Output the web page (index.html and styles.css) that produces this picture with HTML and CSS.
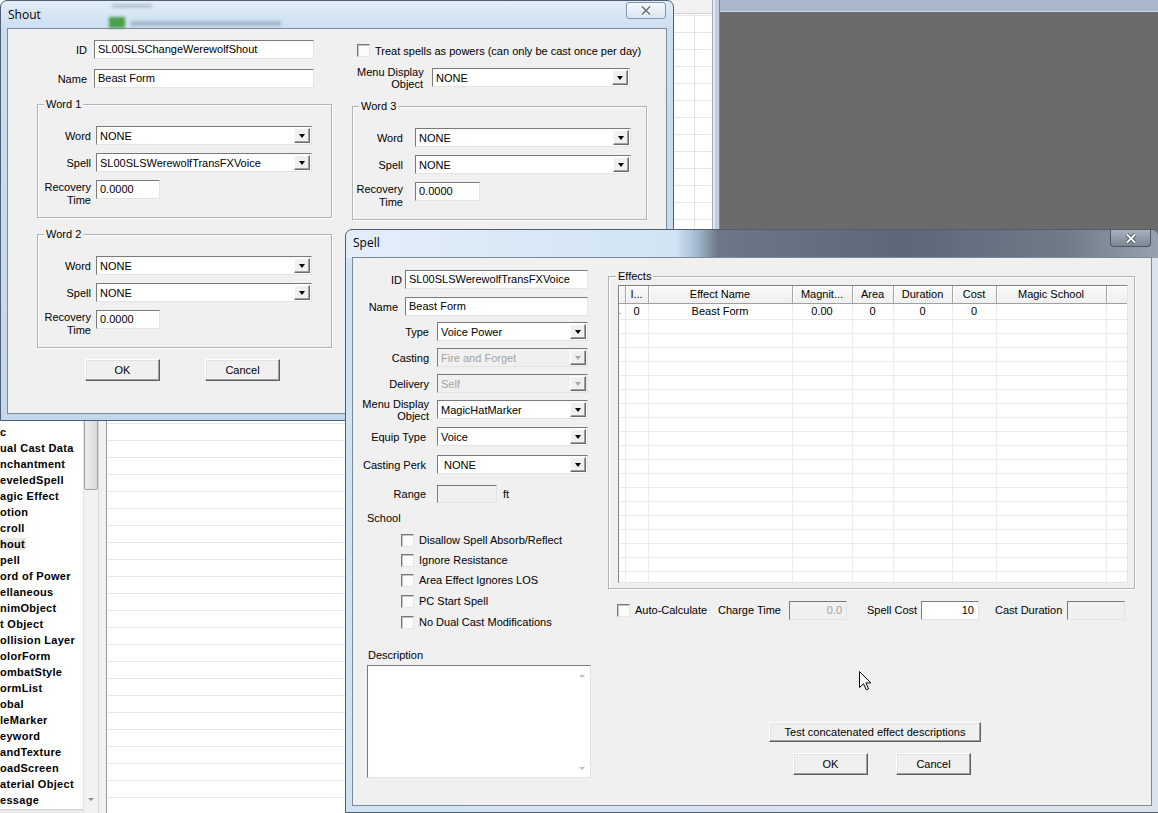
FILE: index.html
```html
<!DOCTYPE html>
<html lang="en">
<head>
    <meta charset="UTF-8">
    <title>Shout - Spell</title>
    <link rel="stylesheet" href="styles.css">
</head>
<body>
<div class="desktop">

    <!-- main editor window behind the dialogs -->
    <div class="main">
        <div class="tree-pane">
            <ul class="tree">
                <li>c</li>
                <li>ual Cast Data</li>
                <li>nchantment</li>
                <li>eveledSpell</li>
                <li>agic Effect</li>
                <li>otion</li>
                <li>croll</li>
                <li class="sel"><span>hout</span></li>
                <li>pell</li>
                <li>ord of Power</li>
                <li>ellaneous</li>
                <li>nimObject</li>
                <li>t Object</li>
                <li>ollision Layer</li>
                <li>olorForm</li>
                <li>ombatStyle</li>
                <li>ormList</li>
                <li>obal</li>
                <li>leMarker</li>
                <li>eyword</li>
                <li>andTexture</li>
                <li>oadScreen</li>
                <li>aterial Object</li>
                <li>essage</li>
            </ul>
            <div class="tree-hscroll"></div>
        </div>
        <div class="tree-scroll">
            <div class="thumb"></div>
            <div class="scroll-arrow"></div>
        </div>
        <div class="splitter"></div>
        <div class="records">
            <div class="records-head"></div>
            <div class="records-rows"></div>
        </div>
        <div class="mdi-edge"></div>
        <div class="mdi">
            <div class="mdi-top"></div>
        </div>
    </div>

    <!-- Shout dialog -->
    <div class="window shout">
        <div class="titlebar">
            <span class="ghost ghost-icon"></span>
            <span class="ghost ghost-text1"></span>
            <span class="ghost ghost-text2"></span>
            <span class="title">Shout</span>
            <span class="close close-light">
                <svg width="14" height="11" viewBox="0 0 14 11"><path d="M3 1.5 L11 9.5 M11 1.5 L3 9.5" stroke="#fff" stroke-width="3"/><path d="M3 1.5 L11 9.5 M11 1.5 L3 9.5" stroke="#5f6a76" stroke-width="1.5"/></svg>
            </span>
        </div>
        <div class="client">
            <div class="shout-head">
                <div class="shout-names">
                    <div class="frow"><span class="lbl">ID</span><span class="edit">SL00SLSChangeWerewolfShout</span></div>
                    <div class="frow"><span class="lbl">Name</span><span class="edit">Beast Form</span></div>
                </div>
                <div class="shout-opts">
                    <div class="check-line"><span class="check"></span>Treat spells as powers (can only be cast once per day)</div>
                    <div class="frow"><span class="lbl two">Menu Display<br>Object</span><span class="combo"><span class="combo-text">NONE</span><span class="drop"></span></span></div>
                </div>
            </div>

            <div class="words">
                <div class="group word">
                    <span class="group-title">Word 1</span>
                    <div class="frow"><span class="lbl">Word</span><span class="combo"><span class="combo-text">NONE</span><span class="drop"></span></span></div>
                    <div class="frow"><span class="lbl">Spell</span><span class="combo"><span class="combo-text">SL00SLSWerewolfTransFXVoice</span><span class="drop"></span></span></div>
                    <div class="frow recovery"><span class="lbl two">Recovery<br>Time</span><span class="edit">0.0000</span></div>
                </div>
                <div class="group word word3">
                    <span class="group-title">Word 3</span>
                    <div class="frow"><span class="lbl">Word</span><span class="combo"><span class="combo-text">NONE</span><span class="drop"></span></span></div>
                    <div class="frow"><span class="lbl">Spell</span><span class="combo"><span class="combo-text">NONE</span><span class="drop"></span></span></div>
                    <div class="frow recovery"><span class="lbl two">Recovery<br>Time</span><span class="edit">0.0000</span></div>
                </div>
                <div class="group word">
                    <span class="group-title">Word 2</span>
                    <div class="frow"><span class="lbl">Word</span><span class="combo"><span class="combo-text">NONE</span><span class="drop"></span></span></div>
                    <div class="frow"><span class="lbl">Spell</span><span class="combo"><span class="combo-text">NONE</span><span class="drop"></span></span></div>
                    <div class="frow recovery"><span class="lbl two">Recovery<br>Time</span><span class="edit">0.0000</span></div>
                </div>
            </div>

            <div class="shout-buttons">
                <button class="btn">OK</button>
                <button class="btn">Cancel</button>
            </div>
        </div>
    </div>

    <!-- Spell dialog -->
    <div class="window spell">
        <div class="titlebar">
            <span class="title">Spell</span>
            <span class="close close-dark">
                <svg width="14" height="11" viewBox="0 0 14 11"><path d="M3 1.5 L11 9.5 M11 1.5 L3 9.5" stroke="#34404d" stroke-width="3.6"/><path d="M3 1.5 L11 9.5 M11 1.5 L3 9.5" stroke="#fff" stroke-width="2"/></svg>
            </span>
        </div>
        <div class="client">
            <div class="spell-left">
                <div class="spell-fields">
                    <div class="frow sp-id"><span class="lbl">ID</span><span class="edit">SL00SLSWerewolfTransFXVoice</span></div>
                    <div class="frow sp-name"><span class="lbl">Name</span><span class="edit">Beast Form</span></div>
                    <div class="frow sp-wide"><span class="lbl">Type</span><span class="combo"><span class="combo-text">Voice Power</span><span class="drop"></span></span></div>
                    <div class="frow sp-wide"><span class="lbl">Casting</span><span class="combo disabled"><span class="combo-text">Fire and Forget</span><span class="drop"></span></span></div>
                    <div class="frow sp-wide"><span class="lbl">Delivery</span><span class="combo disabled"><span class="combo-text">Self</span><span class="drop"></span></span></div>
                    <div class="frow sp-wide"><span class="lbl two">Menu Display<br>Object</span><span class="combo"><span class="combo-text">MagicHatMarker</span><span class="drop"></span></span></div>
                    <div class="frow sp-narrow"><span class="lbl">Equip Type</span><span class="combo"><span class="combo-text">Voice</span><span class="drop"></span></span></div>
                    <div class="frow sp-narrow"><span class="lbl">Casting Perk</span><span class="combo"><span class="combo-text perk">NONE</span><span class="drop"></span></span></div>
                    <div class="frow sp-narrow"><span class="lbl">Range</span><span class="edit range disabled"></span><span class="unit">ft</span></div>
                </div>

                <div class="school">School</div>
                <div class="sp-checks">
                    <div class="check-line"><span class="check"></span>Disallow Spell Absorb/Reflect</div>
                    <div class="check-line"><span class="check"></span>Ignore Resistance</div>
                    <div class="check-line"><span class="check"></span>Area Effect Ignores LOS</div>
                    <div class="check-line"><span class="check"></span>PC Start Spell</div>
                    <div class="check-line"><span class="check"></span>No Dual Cast Modifications</div>
                </div>

                <div class="desc-label">Description</div>
                <div class="memo">
                    <div class="memo-bar"><span class="arrow-up"></span><span class="arrow-down"></span></div>
                </div>
            </div>

            <div class="spell-right">
                <div class="group effects">
                    <span class="group-title">Effects</span>
                    <div class="effects-table">
                        <table>
                            <colgroup>
                                <col class="c-hdr"><col class="c-idx"><col class="c-name"><col class="c-mag"><col class="c-area"><col class="c-dur"><col class="c-cost"><col class="c-school"><col class="c-pad">
                            </colgroup>
                            <thead>
                                <tr><th></th><th>I...</th><th>Effect Name</th><th>Magnit...</th><th>Area</th><th>Duration</th><th>Cost</th><th>Magic School</th><th></th></tr>
                            </thead>
                            <tbody>
                                <tr class="first"><td class="mark">.</td><td>0</td><td>Beast Form</td><td>0.00</td><td>0</td><td>0</td><td>0</td><td></td><td></td></tr>
                                <tr><td></td><td></td><td></td><td></td><td></td><td></td><td></td><td></td><td></td></tr>
                                <tr><td></td><td></td><td></td><td></td><td></td><td></td><td></td><td></td><td></td></tr>
                                <tr><td></td><td></td><td></td><td></td><td></td><td></td><td></td><td></td><td></td></tr>
                                <tr><td></td><td></td><td></td><td></td><td></td><td></td><td></td><td></td><td></td></tr>
                                <tr><td></td><td></td><td></td><td></td><td></td><td></td><td></td><td></td><td></td></tr>
                                <tr><td></td><td></td><td></td><td></td><td></td><td></td><td></td><td></td><td></td></tr>
                                <tr><td></td><td></td><td></td><td></td><td></td><td></td><td></td><td></td><td></td></tr>
                                <tr><td></td><td></td><td></td><td></td><td></td><td></td><td></td><td></td><td></td></tr>
                                <tr><td></td><td></td><td></td><td></td><td></td><td></td><td></td><td></td><td></td></tr>
                                <tr><td></td><td></td><td></td><td></td><td></td><td></td><td></td><td></td><td></td></tr>
                                <tr><td></td><td></td><td></td><td></td><td></td><td></td><td></td><td></td><td></td></tr>
                                <tr><td></td><td></td><td></td><td></td><td></td><td></td><td></td><td></td><td></td></tr>
                                <tr><td></td><td></td><td></td><td></td><td></td><td></td><td></td><td></td><td></td></tr>
                                <tr><td></td><td></td><td></td><td></td><td></td><td></td><td></td><td></td><td></td></tr>
                                <tr><td></td><td></td><td></td><td></td><td></td><td></td><td></td><td></td><td></td></tr>
                                <tr><td></td><td></td><td></td><td></td><td></td><td></td><td></td><td></td><td></td></tr>
                                <tr><td></td><td></td><td></td><td></td><td></td><td></td><td></td><td></td><td></td></tr>
                                <tr><td></td><td></td><td></td><td></td><td></td><td></td><td></td><td></td><td></td></tr>
                                <tr><td></td><td></td><td></td><td></td><td></td><td></td><td></td><td></td><td></td></tr>
                            </tbody>
                        </table>
                    </div>
                </div>

                <div class="calc-row">
                    <span class="check"></span>
                    <span class="calc-lbl auto">Auto-Calculate</span>
                    <span class="calc-lbl charge">Charge Time</span>
                    <span class="edit num disabled">0.0</span>
                    <span class="calc-lbl cost">Spell Cost</span>
                    <span class="edit num">10</span>
                    <span class="calc-lbl dur">Cast Duration</span>
                    <span class="edit num disabled"></span>
                </div>

                <button class="btn btn-test">Test concatenated effect descriptions</button>
                <div class="spell-buttons">
                    <button class="btn">OK</button>
                    <button class="btn">Cancel</button>
                </div>
            </div>
        </div>
    </div>

    <svg class="cursor" width="13" height="20" viewBox="0 0 13 20">
        <path d="M0.5 0.5 L0.5 16.5 L4.5 12.8 L7.3 18.8 L9.6 17.8 L6.9 11.9 L11.8 11.9 Z" fill="#fff" stroke="#000" stroke-width="1"/>
    </svg>
</div>
</body>
</html>
```

FILE: styles.css
```css
* {
    box-sizing: border-box;
}
body {
    margin: 0;
    background: #6b6b6b;
    font-family: "Liberation Sans", Arial, sans-serif;
    font-size: 11px;
    color: #000;
}
.desktop {
    position: relative;
    width: 1158px;
    height: 813px;
    overflow: hidden;
}

/* main editor window */
.main {
    display: flex;
    height: 813px;
}
.tree-pane {
    width: 83px;
    background: #fff;
    display: flex;
    flex-direction: column;
}
.tree {
    list-style: none;
    margin: 0;
    padding: 0 0 1px;
    flex: 1;
    display: flex;
    flex-direction: column;
    justify-content: flex-end;
    font-weight: bold;
    letter-spacing: 0.3px;
}
.tree li {
    height: 16px;
    line-height: 16px;
    white-space: nowrap;
    overflow: hidden;
}
.tree li.sel span {
    background: #e8e8e8;
    padding-right: 1px;
}
.tree-hscroll {
    height: 4px;
    background: #ececec;
    border-top: 1px solid #cfcfcf;
}
.tree-scroll {
    width: 15px;
    background: #f2f2f2;
    border-left: 1px solid #e2e2e2;
    display: flex;
    flex-direction: column;
    padding-bottom: 6px;
}
.thumb {
    margin-top: 380px;
    height: 110px;
    background: linear-gradient(to right, #ebebeb, #d9d9d9);
    border: 1px solid #a2a2a2;
    border-radius: 2px;
}
.scroll-arrow {
    margin-top: auto;
    align-self: center;
    width: 0;
    height: 0;
    border-left: 3px solid transparent;
    border-right: 3px solid transparent;
    border-top: 3px solid #8a8a8a;
    margin-bottom: 6px;
}
.splitter {
    width: 9px;
    background: #f0f0f0;
    border-left: 1px solid #d6d6d6;
    border-right: 1px solid #9c9c9c;
}
.records {
    width: 605px;
    display: flex;
    flex-direction: column;
    background: #fff;
}
.records-head {
    height: 14px;
    background: #f1f1f1;
    border-bottom: 1px solid #d0d0d0;
}
.records-rows {
    flex: 1;
    background:
        linear-gradient(to right, transparent 587px, #e2e2e2 587px 588px, transparent 588px),
        repeating-linear-gradient(to bottom, #e6e6e6 0 1px, #fff 1px 17px);
    background-position: 0 0, 0 1px;
}
.mdi-edge {
    width: 8px;
    background: linear-gradient(to right, #9eabb9 0 1px, #e4eaf1 1px 3px, #c3cedb 3px 7px, #7d8896 7px 8px);
}
.mdi {
    flex: 1;
    background: #6b6b6b;
}
.mdi-top {
    height: 12px;
    background: #a9b8ca;
    border-bottom: 1px solid #cdd6e0;
}

/* dialog windows */
.window {
    position: absolute;
    display: flex;
    flex-direction: column;
    border: 1px solid #4f5f72;
    border-radius: 7px 7px 0 0;
    padding: 0 6px 6px;
}
.shout {
    left: 0;
    top: 0;
    width: 674px;
    height: 421px;
    background: linear-gradient(#e1ecf7, #ccdef0 28px, #c4d8ec);
}
.spell {
    left: 345px;
    top: 229px;
    width: 814px;
    height: 584px;
    background:
        linear-gradient(to right, #e3eef9 0, #d1e3f4 330px, #9fb7cc 352px, #6c7888 372px, #5c6877 560px, #6f7b89 720px, #97a2ae 100%) 0 0 / 100% 28px no-repeat,
        linear-gradient(to right, #d2e2f1, #dbe4ed);
}
.titlebar {
    height: 27px;
    display: flex;
    align-items: flex-start;
    position: relative;
}
.title {
    font-family: "Open Sans", "Noto Sans", sans-serif;
    font-size: 12px;
    line-height: 28px;
    padding-left: 1px;
    position: relative;
}
.spell .title {
    line-height: 26px;
}
.ghost {
    position: absolute;
    filter: blur(1.5px);
}
.ghost-icon {
    left: 102px;
    top: 16px;
    width: 16px;
    height: 11px;
    background: #4aa04a;
}
.ghost-text1 {
    left: 124px;
    top: 20px;
    width: 150px;
    height: 5px;
    background: rgba(90, 110, 140, 0.35);
}
.ghost-text2 {
    left: 105px;
    top: 3px;
    width: 40px;
    height: 4px;
    background: rgba(90, 110, 140, 0.3);
}
.close {
    margin-left: auto;
    display: flex;
    align-items: center;
    justify-content: center;
}
.close-light {
    margin-top: 1px;
    margin-right: 1px;
    width: 40px;
    height: 17px;
    border: 1px solid #8298b0;
    border-radius: 3px;
    background: linear-gradient(#f4f8fc, #dbe6f1);
}
.close-dark {
    margin-right: 1px;
    width: 41px;
    height: 17px;
    border: 1px solid #4a5664;
    border-top: 0;
    border-radius: 0 0 4px 4px;
    background: linear-gradient(#a9b2bd, #7c8794);
}
.client {
    flex: none;
    background: #f0f0f0;
    border: 1px solid #7b8a9c;
}
.shout .client {
    height: 386px;
}
.spell .client {
    height: 549px;
    display: flex;
}

/* common controls */
.frow {
    display: flex;
    align-items: center;
    height: 19px;
}
.lbl {
    flex: none;
    text-align: right;
    white-space: nowrap;
}
.lbl.two {
    line-height: 12px;
}
.edit {
    flex: none;
    height: 19px;
    background: #fff;
    border: 1px solid;
    border-color: #7a7a7a #e4e4e4 #e4e4e4 #7a7a7a;
    padding: 0 3px;
    line-height: 17px;
    white-space: nowrap;
    overflow: hidden;
}
.edit.disabled {
    background: #f0f0f0;
    color: #a0a0a0;
}
.edit.num {
    text-align: right;
    padding-right: 4px;
}
.combo {
    flex: none;
    display: flex;
    align-items: center;
    height: 19px;
    background: #fff;
    border: 1px solid;
    border-color: #7a7a7a #e4e4e4 #e4e4e4 #7a7a7a;
}
.combo-text {
    padding-left: 3px;
    white-space: nowrap;
    overflow: hidden;
}
.combo-text.perk {
    padding-left: 6px;
}
.drop {
    margin-left: auto;
    margin-right: 1px;
    width: 16px;
    height: 15px;
    flex: none;
    background: #f0f0f0;
    border: 1px solid;
    border-color: #fff #6a6a6a #6a6a6a #fff;
    box-shadow: inset -1px -1px #a0a0a0;
    display: flex;
    align-items: center;
    justify-content: center;
}
.drop::after {
    content: "";
    width: 0;
    height: 0;
    border-left: 3.5px solid transparent;
    border-right: 3.5px solid transparent;
    border-top: 4px solid #000;
    margin-top: 1px;
}
.combo.disabled {
    background: #f0f0f0;
    color: #a3a3a3;
}
.combo.disabled .drop::after {
    border-top-color: #a8a8a8;
}
.check-line {
    display: flex;
    align-items: center;
    white-space: nowrap;
}
.check {
    flex: none;
    width: 13px;
    height: 13px;
    margin-right: 5px;
    background: #fbfbfb;
    border: 1px solid;
    border-color: #777 #e6e6e6 #e6e6e6 #777;
    box-shadow: inset 1px 1px #c6c6c6;
}
.btn {
    display: block;
    width: 75px;
    height: 22px;
    padding: 0;
    font: inherit;
    color: #000;
    background: #f0f0f0;
    border: 1px solid;
    border-color: #fff #5e5e5e #5e5e5e #fff;
    box-shadow: inset -1px -1px #a0a0a0, inset 1px 1px #e3e3e3;
}
.group {
    position: relative;
    border: 1px solid #b2b2b2;
    box-shadow: inset 1px 1px #fff, 1px 1px #fff;
}
.group-title {
    position: absolute;
    top: -8px;
    left: 6px;
    padding: 0 2px;
    line-height: 14px;
    background: #f0f0f0;
}

/* Shout dialog body */
.shout-head {
    display: flex;
    padding-top: 11px;
}
.shout-names {
    width: 306px;
    display: flex;
    flex-direction: column;
    gap: 10px;
}
.shout-names .lbl {
    width: 79px;
    margin-right: 7px;
}
.shout-names .edit {
    width: 220px;
}
.shout-opts {
    margin-left: 43px;
}
.shout-opts .check-line {
    height: 19px;
    margin-top: 1px;
}
.shout-opts .frow {
    margin-top: 8px;
}
.shout-opts .lbl {
    width: 66px;
    margin-right: 9px;
}
.shout-opts .combo {
    width: 198px;
}
.words {
    display: grid;
    grid-template-columns: 295px 295px;
    column-gap: 20px;
    row-gap: 14px;
    align-items: start;
    margin: 16px 0 0 29px;
}
.word {
    height: 114px;
    padding-top: 21px;
    display: grid;
    grid-template-rows: 27px 27px 19px;
}
.word .lbl {
    width: 53px;
    margin-right: 5px;
}
.word .combo {
    width: 216px;
}
.word .edit {
    width: 64px;
}
.word .recovery {
    align-items: flex-start;
}
.word .recovery .lbl {
    margin-top: 1px;
    line-height: 13px;
}
.word3 {
    margin-top: 2px;
}
.word3 .lbl {
    width: 50px;
    margin-right: 12px;
}
.word3 .edit {
    width: 65px;
}
.shout-buttons {
    display: flex;
    gap: 45px;
    margin: 11px 0 0 77px;
}

/* Spell dialog body */
.spell-left {
    width: 255px;
    flex: none;
    padding-top: 12px;
}
.spell-fields {
    display: grid;
    grid-template-rows: 27px 25px 26px 26px 26px 27px 28px 29px 19px;
}
.sp-id .lbl {
    width: 49px;
    margin-right: 3px;
}
.sp-name .lbl {
    width: 45px;
    margin-right: 7px;
}
.sp-id .edit,
.sp-name .edit {
    width: 183px;
}
.sp-wide .lbl {
    width: 76px;
    margin-right: 8px;
}
.sp-narrow .lbl {
    width: 73px;
    margin-right: 11px;
}
.spell-fields .combo {
    width: 151px;
}
.edit.range {
    width: 60px;
    height: 18px;
}
.unit {
    margin-left: 6px;
}
.school {
    margin-top: 9px;
    padding-left: 14px;
    line-height: 13px;
}
.sp-checks {
    display: grid;
    grid-template-rows: 20px 20px 20px 22px 20px;
    margin-top: 5px;
    padding-left: 48px;
}
.desc-label {
    margin-top: 17px;
    padding-left: 15px;
    line-height: 13px;
}
.memo {
    margin: 3px 0 0 14px;
    width: 224px;
    height: 113px;
    display: flex;
    background: #fff;
    border: 1px solid;
    border-color: #7a7a7a #e4e4e4 #e4e4e4 #7a7a7a;
}
.memo-bar {
    margin-left: auto;
    width: 17px;
    display: flex;
    flex-direction: column;
    justify-content: space-between;
    align-items: center;
    padding: 8px 0 7px;
}
.arrow-up {
    width: 0;
    height: 0;
    border-left: 3px solid transparent;
    border-right: 3px solid transparent;
    border-bottom: 3px solid #bdbdbd;
}
.arrow-down {
    width: 0;
    height: 0;
    border-left: 3px solid transparent;
    border-right: 3px solid transparent;
    border-top: 3px solid #bdbdbd;
}
.spell-right {
    flex: 1;
}
.effects {
    margin-top: 18px;
    width: 527px;
    height: 313px;
    padding: 8px 0 0 9px;
}
.effects .group-title {
    left: 7px;
}
.effects-table {
    width: 510px;
    height: 298px;
    background: #fff;
    border: 1px solid;
    border-color: #828282 #e4e4e4 #e4e4e4 #828282;
    overflow: hidden;
}
.effects-table table {
    width: 508px;
    table-layout: fixed;
    border-collapse: collapse;
}
.c-hdr { width: 6px; }
.c-idx { width: 23px; }
.c-name { width: 144px; }
.c-mag { width: 60px; }
.c-area { width: 41px; }
.c-dur { width: 59px; }
.c-cost { width: 44px; }
.c-school { width: 110px; }
.c-pad { width: 21px; }
.effects-table th {
    height: 17px;
    padding: 0;
    font-weight: normal;
    background: linear-gradient(#f9f9f9, #efefef);
    border-right: 1px solid #a5a5a5;
    border-bottom: 1px solid #a0a0a0;
    box-shadow: inset 1px 1px #fff;
    white-space: nowrap;
    overflow: hidden;
}
.effects-table td {
    height: 14px;
    padding: 0;
    text-align: center;
    line-height: 12px;
    border-right: 1px solid #ebebeb;
    border-bottom: 1px solid #ebebeb;
    white-space: nowrap;
    overflow: hidden;
}
.effects-table tr.first td {
    height: 16px;
}
.effects-table td.mark {
    text-align: left;
    font-size: 9px;
    color: #555;
}
.calc-row {
    display: flex;
    align-items: center;
    height: 20px;
    margin-top: 11px;
    padding-left: 9px;
}
.calc-row .edit {
    height: 19px;
}
.calc-lbl {
    flex: none;
    white-space: nowrap;
}
.calc-lbl.auto { width: 83px; }
.calc-lbl.charge { width: 71px; }
.calc-row .edit:nth-of-type(1) { width: 57px; }
.calc-lbl.cost { width: 54px; margin-left: 20px; }
.calc-row .edit { width: 58px; }
.calc-lbl.dur { width: 72px; margin-left: 16px; }
.btn-test {
    width: 212px;
    height: 20px;
    margin: 102px 0 0 161px;
}
.spell-buttons {
    display: flex;
    gap: 28px;
    margin: 11px 0 0 185px;
}
.cursor {
    position: absolute;
    left: 859px;
    top: 671px;
}
```
